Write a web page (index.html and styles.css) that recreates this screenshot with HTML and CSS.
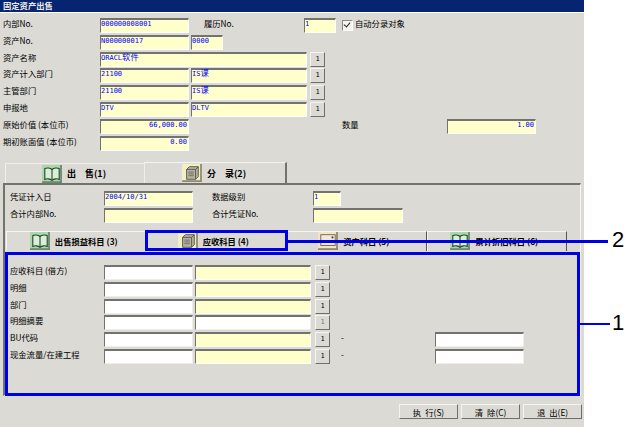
FILE: index.html
```html
<!DOCTYPE html>
<html lang="zh-CN">
<head>
  <meta charset="UTF-8">
  <title>固定资产出售</title>
  <link rel="stylesheet" href="styles.css">
</head>
<body>

  <svg width="0" height="0" class="defs">
    <symbol id="book" viewBox="0 0 22 20">
      <rect width="22" height="20" fill="#a9d8ab"/>
      <rect x="20" width="2" height="20" fill="#6d8a70"/>
      <rect y="18" width="22" height="2" fill="#6d8a70"/>
      <path d="M3 4c2-1 6-1 8 1c2-2 6-2 8-1v12c-2-1-6-1-8 1c-2-2-6-2-8-1z" fill="#d9efd6" stroke="#24452e" stroke-width="1.2"/>
      <path d="M11 5v12" stroke="#24452e" stroke-width="1.2"/>
    </symbol>
    <symbol id="ledger" viewBox="0 0 22 20">
      <rect width="22" height="20" fill="#f3efc4"/>
      <rect x="20" width="2" height="20" fill="#8f8c6c"/>
      <rect y="18" width="22" height="2" fill="#8f8c6c"/>
      <path d="M5 6l3-3h10v11l-3 3h-10z" fill="#b5b3a0" stroke="#55544a"/>
      <path d="M5 6h10v11M15 6l3-3" fill="none" stroke="#55544a"/>
      <path d="M7 9h6M7 11h6M7 13h6" stroke="#6d6c60"/>
    </symbol>
    <symbol id="panel" viewBox="0 0 22 20">
      <rect width="22" height="20" fill="#f3e6c4"/>
      <rect x="20" width="2" height="20" fill="#94866a"/>
      <rect y="18" width="22" height="2" fill="#94866a"/>
      <rect x="3" y="3" width="16" height="12" fill="#efe9d5" stroke="#6b6351"/>
      <path d="M15 5h2v2h-2z" fill="#333"/>
    </symbol>
  </svg>

  <div class="window">
    <div class="titlebar">固定资产出售</div>

    <div class="form">
      <div class="row">
        <span class="label">内部No.</span>
        <span class="field w89">000000008001</span>
        <span class="label history">履历No.</span>
        <span class="field w32">1</span>
        <span class="check"></span>
        <span class="label">自动分录对象</span>
      </div>
      <div class="row">
        <span class="label">资产No.</span>
        <span class="field w89">N000000017</span>
        <span class="field w32">0000</span>
      </div>
      <div class="row">
        <span class="label">资产名称</span>
        <span class="field w207">ORACL<i class="cjk">软件</i></span>
        <span class="pick">1</span>
      </div>
      <div class="row">
        <span class="label">资产计入部门</span>
        <span class="field w89">21100</span>
        <span class="field w116">IS<i class="cjk">课</i></span>
        <span class="pick">1</span>
      </div>
      <div class="row">
        <span class="label">主管部门</span>
        <span class="field w89">21100</span>
        <span class="field w116">IS<i class="cjk">课</i></span>
        <span class="pick">1</span>
      </div>
      <div class="row">
        <span class="label">申报地</span>
        <span class="field w89">DTV</span>
        <span class="field w116">DLTV</span>
        <span class="pick">1</span>
      </div>
      <div class="row">
        <span class="label">原始价值 (本位币)</span>
        <span class="field w89 num">66,000.00</span>
        <span class="label qty">数量</span>
        <span class="field w89 num">1.00</span>
      </div>
      <div class="row">
        <span class="label">期初账面值 (本位币)</span>
        <span class="field w89 num">0.00</span>
      </div>
    </div>

    <div class="tabs">
      <div class="tab">
        <svg class="icon"><use href="#book"/></svg>
        <span>出&emsp;售(1)</span>
      </div>
      <div class="tab active">
        <svg class="icon"><use href="#ledger"/></svg>
        <span>分&emsp;录(2)</span>
      </div>
    </div>

    <div class="panel">
      <div class="row head">
        <span class="label">凭证计入日</span>
        <span class="field w89">2004/10/31</span>
        <span class="label level">数据级别</span>
        <span class="field w28">1</span>
      </div>
      <div class="row head">
        <span class="label">合计内部No.</span>
        <span class="field w89"></span>
        <span class="label level">合计凭证No.</span>
        <span class="field w90"></span>
      </div>

      <div class="subtabs">
        <div class="subtab">
          <svg class="icon"><use href="#book"/></svg>
          <span>出售损益科目 (3)</span>
        </div>
        <div class="subtab active">
          <svg class="icon"><use href="#ledger"/></svg>
          <span>应收科目 (4)</span>
        </div>
        <div class="subtab">
          <svg class="icon"><use href="#panel"/></svg>
          <span>资产科目 (5)</span>
        </div>
        <div class="subtab">
          <svg class="icon"><use href="#book"/></svg>
          <span>累计折旧科目 (6)</span>
        </div>
      </div>

      <div class="detail">
        <div class="row line">
          <span class="label">应收科目 (借方)</span>
          <span class="field white w89"></span>
          <span class="field w116"></span>
          <span class="pick">1</span>
        </div>
        <div class="row line">
          <span class="label">明细</span>
          <span class="field white w89"></span>
          <span class="field w116"></span>
          <span class="pick">1</span>
        </div>
        <div class="row line">
          <span class="label">部门</span>
          <span class="field white w89"></span>
          <span class="field w116"></span>
          <span class="pick">1</span>
        </div>
        <div class="row line">
          <span class="label">明细摘要</span>
          <span class="field white w89"></span>
          <span class="field white w116"></span>
          <span class="pick off">1</span>
        </div>
        <div class="row line">
          <span class="label">BU代码</span>
          <span class="field white w89"></span>
          <span class="field w116"></span>
          <span class="pick">1</span>
          <span class="dash">-</span>
          <span class="field white w89"></span>
        </div>
        <div class="row line">
          <span class="label">现金流量/在建工程</span>
          <span class="field white w89"></span>
          <span class="field w116"></span>
          <span class="pick">1</span>
          <span class="dash">-</span>
          <span class="field white w89"></span>
        </div>
      </div>
    </div>

    <div class="actions">
      <button class="action">执&ensp;行(S)</button>
      <button class="action">清&ensp;除(C)</button>
      <button class="action">退&ensp;出(E)</button>
    </div>
  </div>

  <!-- callouts drawn over the screen -->
  <div class="box box-tab"></div>
  <div class="box box-detail"></div>
  <div class="lead lead-tab"></div>
  <div class="lead lead-detail"></div>
  <div class="num-note note-tab">2</div>
  <div class="num-note note-detail">1</div>

</body>
</html>
```

FILE: styles.css
```css
body {
  margin: 0;
  background-color: #fff;
  font-family: "Noto Sans CJK SC", "Liberation Sans", sans-serif;
  font-size: 8.3px;
  color: #000;
}
.defs {
  position: absolute;
}
.window {
  width: 584px;
  height: 427px;
  background-color: #dbdad4;
  overflow: hidden;
}
.titlebar {
  height: 12px;
  line-height: 11px;
  padding-left: 3px;
  background-color: #06246f;
  border-bottom: 1px solid #fff;
  color: #eee;
  font-weight: bold;
}
.form {
  padding: 5px 0 0 3px;
}
.row {
  display: flex;
  align-items: flex-start;
  gap: 2px;
  height: 16.8px;
}
.label {
  flex: none;
  width: 95px;
  line-height: 11px;
  white-space: nowrap;
}
.history {
  width: 98px;
  margin-left: 13px;
}
.qty {
  width: 103px;
  margin-left: 151px;
}
.check {
  flex: none;
  width: 9px;
  height: 9px;
  margin: 2px 0 0 4px;
  background-color: #f4f4f0;
  border: 1px solid #8b8b86;
  border-right-color: #fff;
  border-bottom-color: #fff;
  position: relative;
}
.check::after {
  content: "";
  position: absolute;
  left: 2px;
  top: 0;
  width: 3px;
  height: 5px;
  border: solid #222;
  border-width: 0 1.5px 1.5px 0;
  transform: rotate(40deg);
}
.field {
  flex: none;
  box-sizing: border-box;
  height: 15px;
  background-color: #ffffcc;
  border: 1px solid;
  border-color: #73736e #fff #fff #73736e;
  border-width: 2px 1px 1px 1px;
  color: #0000ff;
  font-family: "DejaVu Sans Mono", monospace;
  font-size: 7px;
  line-height: 8px;
  white-space: nowrap;
}
.field.white {
  background-color: #fff;
  border-right-color: #efeeea;
  border-bottom-color: #efeeea;
}
.cjk {
  font-family: "Noto Sans CJK SC", sans-serif;
  font-size: 8.3px;
  font-style: normal;
  line-height: 0;
}
.num {
  text-align: right;
  padding-right: 1px;
}
.w28 { width: 28px; }
.w32 { width: 32px; }
.w89 { width: 89px; }
.w90 { width: 90px; }
.w116 { width: 116px; }
.w207 { width: 207px; }
.pick {
  flex: none;
  box-sizing: border-box;
  width: 15px;
  height: 15px;
  margin-left: 1px;
  border: 1px solid;
  border-color: #f4f4f0 #6f6f6a #6f6f6a #f4f4f0;
  text-align: center;
  line-height: 12px;
  font-family: "DejaVu Sans Mono", monospace;
  font-size: 7px;
}
.pick.off {
  color: #777;
}

.tabs {
  display: flex;
  margin: 10px 0 0 5px;
  height: 21px;
}
.tab {
  box-sizing: border-box;
  display: flex;
  align-items: center;
  justify-content: center;
  gap: 4px;
  width: 139px;
  padding-right: 3px;
  border-top: 1px solid #efeeea;
  border-left: 1px solid #efeeea;
  font-size: 9px;
  font-weight: bold;
  margin-top: 1px;
}
.tab.active {
  width: 143px;
  margin-top: 0;
  border-right: 2px solid #73736e;
  border-top: 1px solid #f4f4f0;
}
.icon {
  flex: none;
  width: 22px;
  height: 18px;
}
.panel {
  box-sizing: border-box;
  position: relative;
  width: 578px;
  height: 213px;
  margin-left: 3px;
  padding: 6px 0 0 5px;
  border-top: 2px solid #73736e;
  border-left: 2px solid #73736e;
  border-right: 1px solid #f4f4f0;
  border-bottom: 1px solid #f4f4f0;
}
.head .label {
  width: 92px;
}
.head .level {
  width: 99px;
  margin-left: 17px;
}
.subtabs {
  display: flex;
  margin: 6px 0 0 -4px;
  width: 561px;
  height: 20px;
}
.subtab {
  box-sizing: border-box;
  display: flex;
  align-items: center;
  justify-content: center;
  gap: 4px;
  flex: 1;
  padding-right: 6px;
  border-top: 1px solid #f4f4f0;
  border-left: 1px solid #f4f4f0;
  border-right: 1px solid #55554f;
  font-weight: bold;
}
.subtab:first-child {
  border-right: none;
}
.detail {
  margin-top: 14px;
}
.line .label {
  width: 92px;
}
.line .pick {
  margin-left: 2px;
}
.dash {
  width: 92px;
  margin-left: 9px;
  line-height: 11px;
}
.actions {
  display: flex;
  justify-content: flex-end;
  gap: 3px;
  margin: 8px 2px 0 0;
}
.action {
  box-sizing: border-box;
  width: 59px;
  height: 15px;
  padding: 0;
  background-color: #dbdad4;
  border: 1px solid;
  border-color: #f4f4f0 #6f6f6a #6f6f6a #f4f4f0;
  font-family: inherit;
  font-size: 8.3px;
  line-height: 12px;
  color: #000;
}

.box {
  position: absolute;
  box-sizing: border-box;
  border: 3px solid #0000e6;
}
.box-tab {
  left: 145px;
  top: 230px;
  width: 143px;
  height: 21px;
}
.box-detail {
  left: 5px;
  top: 252px;
  width: 575px;
  height: 144px;
}
.lead {
  position: absolute;
  background-color: #0000e6;
}
.lead-tab {
  left: 288px;
  top: 240px;
  width: 320px;
  height: 3px;
}
.lead-detail {
  left: 580px;
  top: 323px;
  width: 30px;
  height: 2px;
}
.num-note {
  position: absolute;
  left: 612px;
  font-family: "Liberation Sans", sans-serif;
  font-size: 22px;
  line-height: 22px;
  color: #000;
}
.note-tab {
  top: 229px;
}
.note-detail {
  top: 312px;
}
```
